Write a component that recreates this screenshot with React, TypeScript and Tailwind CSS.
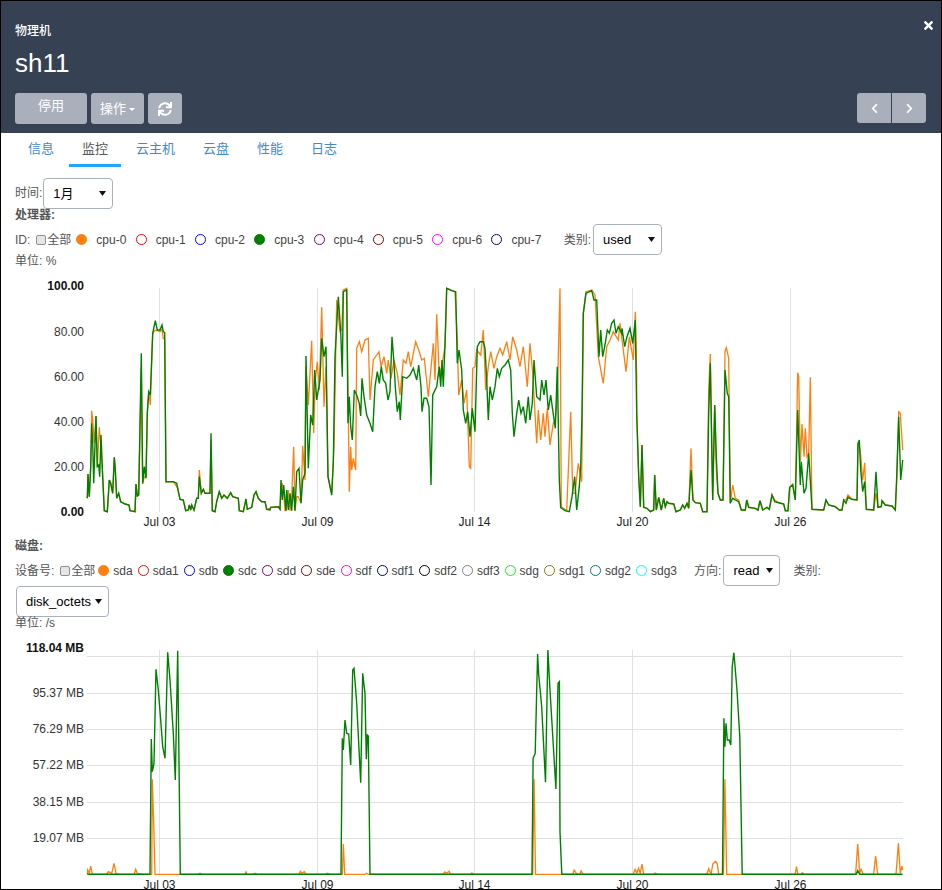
import { FaChevronLeft, FaChevronRight, FaSync, FaTimes } from 'react-icons/fa'

// traces were read off 3x crops of the picture, so each block keeps its crop origin
type Block = { ox: number; oy: number; sx?: number; d: number[] }

const toPoints = (blocks: Block[]) =>
  blocks
    .flatMap(({ ox, oy, sx = 3, d }) => {
      const out: string[] = []
      for (let i = 0; i < d.length; i += 2) {
        out.push(`${(ox + d[i] / sx).toFixed(1)},${(oy + d[i + 1] / 3).toFixed(1)}`)
      }
      return out
    })
    .join(' ')

const cpuGreen: Block[] = [
  { ox: 0, oy: 280, d: [262,655,264,582,268,650,272,560,275,430,278,490,281,610,288,408,292,560,296,555,299,590,303,465,308,590,313,692,322,695,328,600,332,610,338,640,343,532,346,570,350,655,356,640,362,665,375,672,387,675,390,692,405,695,408,612,412,648,416,645,424,220,428,610,433,560,438,595,442,400,446,335,451,345,458,160,466,122,472,150,480,150,486,135,490,155,494,158,498,605,520,605,530,610,533,625,540,658,550,660,557,692,565,690,568,675,572,690,575,675,582,690,590,655,595,655,598,590,604,640,610,628,615,640,630,640,633,460,637,692,645,695,650,665,658,635,665,655,672,645,682,655,692,638,698,650,715,655,718,692,730,695,738,657,742,688,755,682,762,645,768,635,775,655,785,665,795,665,800,688,810,690,812,682,835,680,840,688,843,600,847,660,851,615,855,660,858,692,860,630,865,690,870,640,875,692,880,620,885,692,890,575,897,565,903,670,908,600,915,580,918,228,925,565,932,405,938,435,944,270,950,360] },
  { ox: 320, oy: 280, d: [0,300,5,175,12,230,18,200,24,590,35,645,40,550,45,230,55,50,62,155,67,290,70,35,80,30,84,430,88,350,92,440,97,480,103,330,110,345,118,370,122,408,126,295,132,350,140,405,150,430,158,455,165,320,172,275,178,310,184,260,190,300,197,310,204,360,210,335,216,170,222,250,226,320,232,395,238,365,241,420,248,290,260,295,270,285,280,265,290,300,296,255,303,320,306,395,312,355,320,355,327,380,333,615,338,345,350,320,358,260,362,320,366,240,370,320,375,195,380,25,395,32,407,35,412,250,417,210,425,270,430,390,437,430,443,395,450,470,457,385,465,455,472,200,480,185,490,185,495,205,500,300,505,420,510,320,517,360,525,320,532,265,538,290,545,265,555,255,565,240,572,270,577,400,582,470,590,400,596,360,603,400,610,380,617,430,625,350,630,420,637,370,642,240,650,350,660,360,665,300,672,345,678,300,685,390,692,345,698,390,706,445,712,260,718,600,722,683,735,692,748,695,756,650,764,590,770,690,778,620,782,560,786,400,790,100,798,40,815,32,822,60,830,60,837,230,842,150,848,230,855,195,862,150,868,160,875,130,882,120,888,160,895,140,905,160] },
  { ox: 622, oy: 280, d: [0,145,8,200,15,170,24,145,32,190,40,120,44,400,50,590,55,680,60,495,65,682,75,685,85,695,95,690,98,585,103,690,110,652,118,690,125,655,130,680,135,665,140,670,155,672,162,695,175,690,182,675,188,685,195,670,200,685,207,570,213,660,220,668,235,670,242,695,255,695,260,400,265,250,272,660,278,375,283,530,288,640,295,660,303,660,309,270,316,340,320,350,325,670,332,655,340,660,350,665,358,690,370,690,374,660,380,682,400,685,408,690,414,662,422,690,435,682,442,688,450,645,458,665,470,668,485,672,490,692,498,692,503,622,512,615,520,660,527,390,535,615,538,545,546,640,552,625,560,520,570,688,605,690,612,660,620,675,640,680,652,690,660,690,665,660,672,670,678,652,690,658,705,660,708,490,712,480,716,570,722,635,728,605,733,688,755,690,762,575,768,682,778,680,780,662,790,675,810,678,820,690,824,590,830,410,836,600,842,540] },
]

const cpuOrange: Block[] = [
  { ox: 0, oy: 280, d: [262,655,264,582,268,650,272,560,275,392,278,420,283,490,288,408,292,560,298,442,303,500,308,590,313,692,322,695,328,600,332,610,338,640,343,532,346,570,350,655,356,640,362,665,375,672,387,675,390,692,405,695,408,612,412,648,416,645,424,265,428,612,433,590,438,590,442,400,446,335,451,375,458,160,466,150,480,155,486,148,490,175,494,178,498,605,520,605,530,620,533,625,540,658,550,660,557,692,565,690,568,675,572,690,575,675,582,690,590,655,595,655,598,570,604,640,610,628,615,640,630,640,633,480,637,692,645,695,650,665,658,635,665,655,672,645,682,655,692,638,698,650,715,655,718,692,730,695,738,657,742,688,755,682,762,645,768,635,775,655,785,665,795,665,800,688,810,685,812,682,835,680,840,688,843,620,847,610,851,640,855,692,858,692,865,630,870,692,875,650,881,500,885,692,890,650,895,650,903,670,908,497,915,600,918,260,925,375,935,182,941,460,946,300,952,245,958,330] },
  { ox: 320, oy: 280, d: [5,82,12,380,18,260,24,590,35,640,42,500,50,60,60,155,65,150,70,30,80,25,85,400,88,635,92,500,95,570,100,535,107,570,110,205,118,185,125,215,135,180,145,175,150,360,160,240,170,225,177,215,183,260,192,230,200,280,205,240,213,295,222,240,232,280,240,345,250,240,258,250,265,215,272,260,287,185,298,215,305,240,313,235,325,350,340,190,345,300,350,103,358,290,365,260,375,200,380,25,405,35,412,180,416,345,425,300,432,370,440,330,448,560,452,565,458,265,465,260,470,210,482,225,490,150,497,330,505,260,512,215,522,265,530,230,540,205,548,225,560,185,570,240,578,170,590,210,600,260,610,200,622,320,630,190,638,280,650,490,655,390,662,480,670,400,675,470,682,385,690,495,700,430,706,420,712,350,720,25,724,680,740,692,752,395,758,640,765,640,775,550,785,605,790,100,798,35,815,30,825,45,835,230,850,310,860,200,870,180,880,155,895,180,900,130,918,275,928,170,940,240,946,95,950,290] },
  { ox: 622, oy: 280, d: [44,400,50,590,55,680,60,495,65,682,75,685,85,695,95,690,98,585,103,690,110,652,118,690,125,655,130,680,135,665,140,670,155,672,162,695,175,690,182,675,188,685,195,670,200,685,207,505,213,660,220,668,235,670,242,695,255,695,260,330,265,222,272,660,278,375,283,570,288,640,295,660,303,660,309,215,313,203,320,235,325,670,332,615,340,655,350,660,358,690,370,690,374,660,380,682,400,685,408,690,414,662,422,690,435,682,442,688,450,645,458,660,470,668,485,672,490,692,498,692,503,622,512,612,520,660,527,278,530,290,535,545,540,432,546,530,550,445,555,530,560,520,565,292,570,688,605,690,612,660,620,675,640,680,652,690,660,690,665,660,672,660,678,645,690,658,705,660,708,490,712,500,716,525,722,600,728,548,733,688,755,690,762,640,768,682,778,680,780,662,790,675,810,678,820,690,824,610,830,395,835,400,842,510] },
]

const diskGreen: Block[] = [
  { ox: 0, oy: 640, d: [262,703,450,703,454,297,457,395,462,370,468,88,475,150,482,240,488,320,495,355,503,37,510,120,520,280,526,420,533,32,541,703,1023,703,1027,295,1030,330,1035,240,1040,280,1046,282,1052,375,1058,90,1062,85,1070,190,1082,428,1088,100,1095,160,1099,358,1102,285,1105,288,1110,703,1200,703] },
  { ox: 400, oy: 640, sx: 2.893, d: [382,703,385,355,391,340,398,42,401,100,410,200,421,427,428,30,434,150,451,447,457,130,461,125,463,575,468,703,933,703,937,235,940,320,943,250,947,300,952,300,957,315,961,80,966,38,975,150,983,290,990,703,1320,703,1324,692,1330,703,1454,703] },
]

const diskOrange: Block[] = [
  { ox: 0, oy: 640, d: [262,703,263,690,268,700,272,678,277,703,320,703,325,695,335,700,342,670,348,700,357,703,403,703,407,688,412,700,432,703,455,703,457,418,461,550,465,703,595,703,600,700,605,703,735,703,738,696,741,703,760,703,765,700,770,703,898,703,901,694,906,700,913,695,918,703,978,703,982,700,990,703,1027,703,1030,612,1034,703,1095,703,1100,700,1105,703,1200,703] },
  { ox: 400, oy: 640, sx: 2.893, d: [125,703,130,696,135,700,142,694,146,703,205,703,208,699,212,703,384,703,388,418,392,703,500,703,504,690,510,700,515,703,520,703,524,693,530,703,675,703,680,688,685,700,690,685,695,700,700,672,705,703,735,703,738,699,745,703,888,703,893,686,900,703,905,672,913,664,918,672,922,703,936,703,940,418,945,703,1143,703,1147,680,1151,703,1160,703,1164,698,1168,703,1318,703,1324,612,1330,700,1334,688,1340,703,1370,703,1376,648,1382,703,1435,703,1442,610,1447,700,1452,678,1454,690] },
]

const dates: [number, string][] = [
  [159.5, 'Jul 03'],
  [317.5, 'Jul 09'],
  [474.5, 'Jul 14'],
  [632.5, 'Jul 20'],
  [790.5, 'Jul 26'],
]

const cpuTicks: [number, string, boolean][] = [
  [290, '100.00', true],
  [336, '80.00', false],
  [381, '60.00', false],
  [426, '40.00', false],
  [471, '20.00', false],
  [516, '0.00', true],
]

const diskTicks: [number, number, string, boolean][] = [
  [652, 656.5, '118.04 MB', true],
  [697, 693.5, '95.37 MB', false],
  [733, 729.5, '76.29 MB', false],
  [769, 765.5, '57.22 MB', false],
  [806, 802.5, '38.15 MB', false],
  [842, 838.5, '19.07 MB', false],
]

const cpuLegend: [string, string][] = [
  ['cpu-0', 'bg-[#ff7f0e] border-[#ff7f0e]'],
  ['cpu-1', 'border-[#ff0000]'],
  ['cpu-2', 'border-[#0000ff]'],
  ['cpu-3', 'bg-[#008000] border-[#008000]'],
  ['cpu-4', 'border-[#800080]'],
  ['cpu-5', 'border-[#800000]'],
  ['cpu-6', 'border-[#ff00ff]'],
  ['cpu-7', 'border-[#000080]'],
]

const diskLegend: [string, string][] = [
  ['sda', 'bg-[#ff7f0e] border-[#ff7f0e]'],
  ['sda1', 'border-[#ff0000]'],
  ['sdb', 'border-[#0000ff]'],
  ['sdc', 'bg-[#008000] border-[#008000]'],
  ['sdd', 'border-[#800080]'],
  ['sde', 'border-[#800000]'],
  ['sdf', 'border-[#ff00ff]'],
  ['sdf1', 'border-[#000080]'],
  ['sdf2', 'border-[#000000]'],
  ['sdf3', 'border-[#808080]'],
  ['sdg', 'border-[#00ff00]'],
  ['sdg1', 'border-[#808000]'],
  ['sdg2', 'border-[#008080]'],
  ['sdg3', 'border-[#00ffff]'],
]

function Caret() {
  return (
    <svg width="7" height="5" viewBox="0 0 7 5" className="shrink-0">
      <path d="M0 0h7L3.5 5z" fill="#111" />
    </svg>
  )
}

function FakeSelect({ value, className }: { value: string; className: string }) {
  return (
    <div
      className={`flex h-[31px] shrink-0 items-center justify-between rounded-[4px] border border-[#a9b0bb] bg-white pl-[9px] pr-[6px] text-[13px] text-black ${className}`}
    >
      <span>{value}</span>
      <Caret />
    </div>
  )
}

function Check() {
  return <span className="h-[10px] w-[10px] shrink-0 rounded-[2px] border border-[#8f8f8f] bg-[#e6e6e6]" />
}

function Legend({ items, labelGap, tailGap }: { items: [string, string][]; labelGap: string; tailGap: string }) {
  return (
    <>
      {items.map(([name, color]) => (
        <span key={name} className={`flex items-center ${tailGap}`}>
          <span className={`h-[11px] w-[11px] shrink-0 rounded-full border ${color}`} />
          <span className={`${labelGap} text-[#444]`}>{name}</span>
        </span>
      ))}
    </>
  )
}

function Lines({ orange, green }: { orange: Block[]; green: Block[] }) {
  return (
    <>
      <polyline points={toPoints(orange)} fill="none" stroke="#ff7f0e" strokeWidth="1.3" />
      <polyline points={toPoints(green)} fill="none" stroke="#008000" strokeWidth="1.4" />
    </>
  )
}

function CpuChart() {
  return (
    <svg width="940" height="261" viewBox="1 278 940 261" className="mt-[10px] block shrink-0 text-[12px]">
      {dates.map(([x, label]) => (
        <g key={label}>
          <line x1={x} x2={x} y1="288" y2="512" stroke="#e0e0e0" />
          <text x={x} y="526" textAnchor="middle" fill="#222">
            {label}
          </text>
        </g>
      ))}
      {cpuTicks.map(([y, label, strong]) => (
        <text key={label} x="84" y={y} textAnchor="end" fill={strong ? '#111' : '#333'} fontWeight={strong ? 700 : 400}>
          {label}
        </text>
      ))}
      <Lines orange={cpuOrange} green={cpuGreen} />
    </svg>
  )
}

function DiskChart() {
  return (
    <svg width="940" height="260" viewBox="1 629 940 260" className="block shrink-0 text-[12px]">
      {diskTicks.map(([y, lineY, label, strong]) => (
        <g key={label}>
          <line x1="87" x2="903" y1={lineY} y2={lineY} stroke="#e0e0e0" />
          <text x="84" y={y} textAnchor="end" fill={strong ? '#111' : '#333'} fontWeight={strong ? 700 : 400}>
            {label}
          </text>
        </g>
      ))}
      {dates.map(([x, label]) => (
        <g key={label}>
          <line x1={x} x2={x} y1="650" y2="874" stroke="#e0e0e0" />
          <text x={x} y="889" textAnchor="middle" fill="#222">
            {label}
          </text>
        </g>
      ))}
      <Lines orange={diskOrange} green={diskGreen} />
    </svg>
  )
}

export default function App() {
  const tabs = ['信息', '监控', '云主机', '云盘', '性能', '日志']

  return (
    <div className="flex h-[890px] w-[942px] flex-col overflow-hidden border border-black bg-white font-['Liberation_Sans','Noto_Sans_CJK_SC',sans-serif] text-[12px] text-[#555]">
      <header className="relative h-[132px] shrink-0 bg-[#364153] px-[14px] pt-[22px] text-white">
        <button className="absolute right-[6px] top-[18px] text-[13px] text-white">
          <FaTimes />
        </button>
        <div className="h-[16px] text-[12px] font-medium leading-[16px]">物理机</div>
        <h1 className="mt-[8px] h-[32px] text-[26px] leading-[32px]">sh11</h1>
        <div className="mt-[14px] flex items-start justify-between pr-[1px]">
          <div className="flex gap-[4px] text-[13px]">
            <button className="h-[31px] w-[72px] rounded-[3px] bg-[#a9b0bb] pb-[5px] text-white">停用</button>
            <button className="mr-[0px] flex h-[31px] w-[53px] items-center justify-center gap-[3px] rounded-[3px] bg-[#a9b0bb] text-white">
              操作
              <span className="mt-[2px] border-x-[3px] border-t-[3px] border-x-transparent border-t-white" />
            </button>
            <button className="flex h-[31px] w-[34px] items-center justify-center rounded-[3px] bg-[#a9b0bb] text-[14px] text-white">
              <FaSync />
            </button>
          </div>
          <div className="flex text-[11px] text-white">
            <button className="flex h-[30px] w-[35px] items-center justify-center rounded-l-[3px] border-r border-[#364153] bg-[#a9b0bb]">
              <FaChevronLeft />
            </button>
            <button className="flex h-[30px] w-[34px] items-center justify-center rounded-r-[3px] bg-[#a9b0bb]">
              <FaChevronRight />
            </button>
          </div>
        </div>
      </header>

      <nav className="flex h-[34px] shrink-0 gap-[2px] pl-[14px] text-[13px] text-[#428bca]">
        {tabs.map(tab => (
          <a
            key={tab}
            className={
              tab === '监控'
                ? 'h-[34px] border-b-[3px] border-[#1ea7fd] px-[13px] pt-[8px] leading-[16px] text-[#555]'
                : 'h-[34px] px-[13px] pt-[8px] leading-[16px]'
            }
          >
            {tab}
          </a>
        ))}
      </nav>

      <section className="mt-[11px] flex shrink-0 flex-col px-[14px]">
        <div className="flex h-[31px] items-center gap-[1px]">
          <span className="mt-[-1px]">时间:</span>
          <FakeSelect value="1月" className="w-[70px]" />
        </div>
        <div className="h-[15px] font-bold leading-[13px]">处理器:</div>
        <div className="flex h-[31px] items-center">
          <span>ID:</span>
          <span className="ml-[6px] flex items-center">
            <Check />
            <span className="ml-[1px]">全部</span>
          </span>
          <span className="ml-[5px] flex">
            <Legend items={cpuLegend} labelGap="ml-[9px]" tailGap="mr-[4px] w-[55.3px]" />
          </span>
          <span className="ml-[13px]">类别:</span>
          <FakeSelect value="used" className="ml-[2px] w-[69px]" />
        </div>
        <div className="h-[13px] leading-[13px]">单位: %</div>
      </section>

      <CpuChart />

      <section className="flex shrink-0 flex-col px-[14px]">
        <div className="h-[14px] font-bold leading-[14px]">磁盘:</div>
        <div className="mt-[2px] flex h-[31px] items-center">
          <span>设备号:</span>
          <span className="ml-[6px] flex items-center">
            <Check />
            <span className="ml-[1px]">全部</span>
          </span>
          <span className="ml-[3px] flex">
            <Legend items={diskLegend} labelGap="ml-[4px]" tailGap="mr-[5px]" />
          </span>
          <span className="ml-[12px]">方向:</span>
          <FakeSelect value="read" className="ml-[2px] w-[57px]" />
          <span className="ml-[13px]">类别:</span>
        </div>
        <FakeSelect value="disk_octets" className="ml-[1px] w-[93px]" />
        <div className="h-[12px] leading-[12px]">单位: /s</div>
      </section>

      <DiskChart />
    </div>
  )
}
